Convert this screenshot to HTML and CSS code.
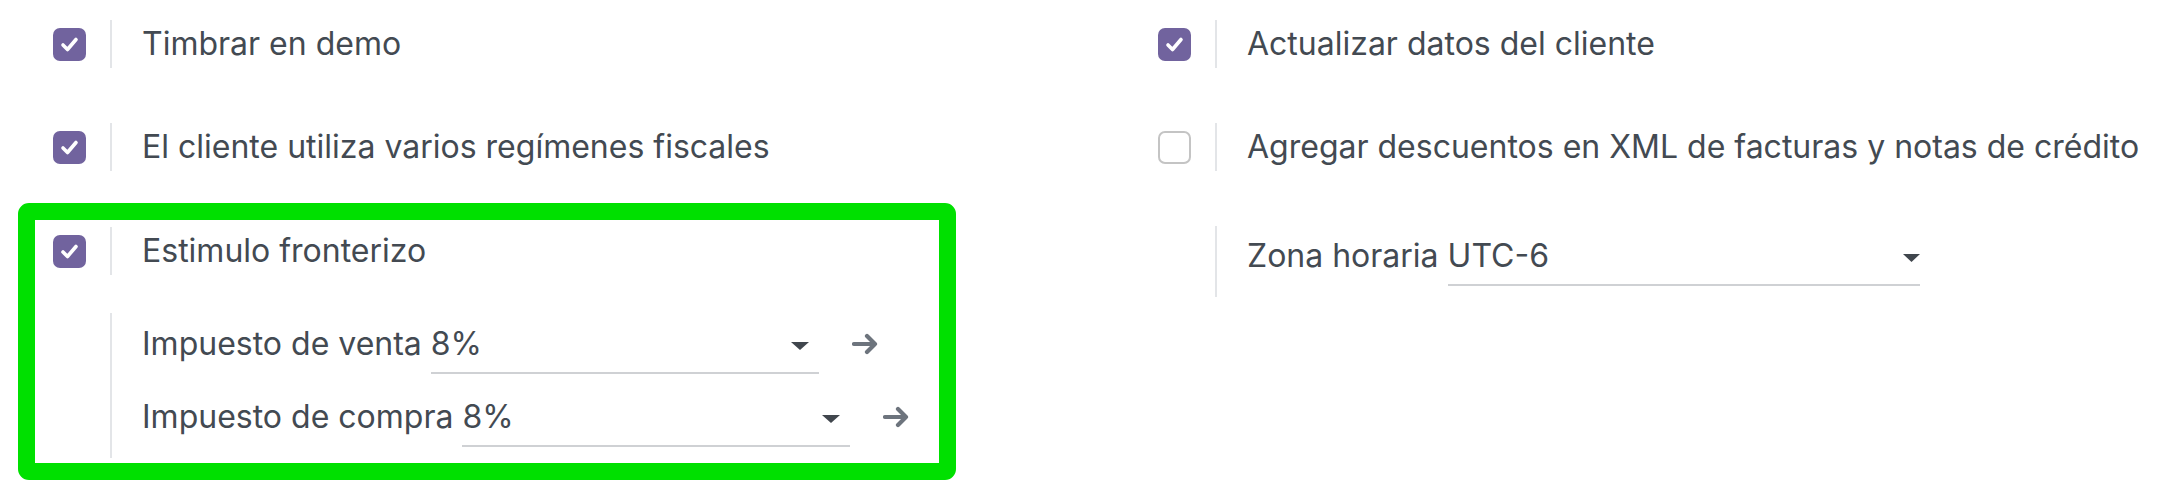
FILE: index.html
```html
<!DOCTYPE html>
<html>

<head>
  <meta http-equiv="Content-Type" content="text/html; charset=UTF-8">
  <title>Ajustes CFDI</title>
  <link rel="stylesheet" href="styles.css">
</head>

<body>

  <div class="settings">

    <!-- columna izquierda -->
    <div class="col">

      <div class="setting">
        <div class="setting-left">
          <span class="check on">
            <svg width="33" height="33" viewBox="0 0 33 33"><path d="M10 17 L14.5 21.5 L23 11.5" /></svg>
          </span>
        </div>
        <div class="setting-right">
          <span class="label">Timbrar en demo</span>
        </div>
      </div>

      <div class="setting">
        <div class="setting-left">
          <span class="check on">
            <svg width="33" height="33" viewBox="0 0 33 33"><path d="M10 17 L14.5 21.5 L23 11.5" /></svg>
          </span>
        </div>
        <div class="setting-right">
          <span class="label">El cliente utiliza varios regímenes fiscales</span>
        </div>
      </div>

      <div class="highlight">
        <div class="setting">
          <div class="setting-left">
            <span class="check on">
              <svg width="33" height="33" viewBox="0 0 33 33"><path d="M10 17 L14.5 21.5 L23 11.5" /></svg>
            </span>
          </div>
          <div class="setting-right">
            <span class="label">Estimulo fronterizo</span>
          </div>
        </div>

        <div class="setting sub">
          <div class="setting-left"></div>
          <div class="setting-right fields">
            <div class="field-row">
              <span class="label">Impuesto de venta</span>
              <span class="field tax">8%
                <svg class="caret" width="18" height="8" viewBox="0 0 18 8"><path d="M0 0 H18 L9 8 Z" /></svg>
              </span>
              <svg class="go" width="27" height="22" viewBox="0 0 27 22"><path d="M2 11 H23 M15 3 L23 11 L15 19" /></svg>
            </div>
            <div class="field-row">
              <span class="label">Impuesto de compra</span>
              <span class="field tax">8%
                <svg class="caret" width="18" height="8" viewBox="0 0 18 8"><path d="M0 0 H18 L9 8 Z" /></svg>
              </span>
              <svg class="go" width="27" height="22" viewBox="0 0 27 22"><path d="M2 11 H23 M15 3 L23 11 L15 19" /></svg>
            </div>
          </div>
        </div>
      </div>

    </div>

    <!-- columna derecha -->
    <div class="col">

      <div class="setting">
        <div class="setting-left">
          <span class="check on">
            <svg width="33" height="33" viewBox="0 0 33 33"><path d="M10 17 L14.5 21.5 L23 11.5" /></svg>
          </span>
        </div>
        <div class="setting-right">
          <span class="label">Actualizar datos del cliente</span>
        </div>
      </div>

      <div class="setting">
        <div class="setting-left">
          <span class="check"></span>
        </div>
        <div class="setting-right">
          <span class="label">Agregar descuentos en XML de facturas y notas de crédito</span>
        </div>
      </div>

      <div class="setting">
        <div class="setting-left"></div>
        <div class="setting-right fields">
          <div class="field-row">
            <span class="label">Zona horaria</span>
            <span class="field tz">UTC-6
              <svg class="caret" width="17" height="8" viewBox="0 0 17 8"><path d="M0 0 H17 L8.5 8 Z" /></svg>
            </span>
          </div>
        </div>
      </div>

    </div>

  </div>

</body>

</html>
```

FILE: styles.css
```css
body {
  margin: 0;
  background: #fff;
  font-family: Inter, "Noto Sans", sans-serif;
  font-size: 32px;
  line-height: 48px;
  color: #434a52;
}

.settings {
  display: grid;
  grid-template-columns: 1105px 1fr;
  align-items: start;
  padding: 20px 0 0 18px;
}

.setting {
  display: flex;
  padding-left: 35px;
}

.setting + .setting {
  margin-top: 55px;
}

.setting-left {
  width: 57px;
  flex: none;
  display: flex;
  align-items: center;
}

.setting-right {
  border-left: 2px solid #e3e5e8;
  padding-left: 30px;
}

.check {
  width: 33px;
  height: 33px;
  box-sizing: border-box;
  border: 2px solid #c4c4c4;
  border-radius: 7px;
  background: #fff;
}

.check.on {
  border: none;
  background: #71639e;
}

.check svg {
  display: block;
}

.check path {
  fill: none;
  stroke: #fff;
  stroke-width: 3.6;
  stroke-linecap: round;
  stroke-linejoin: round;
}

/* recuadro verde */
.highlight {
  margin-top: 32px;
  width: 938px;
  box-sizing: border-box;
  border: 17px solid #00e000;
  border-radius: 11px;
  padding: 7px 0 5px 0;
}

.highlight .setting {
  padding-left: 18px;
}

.highlight .setting.sub {
  margin-top: 38px;
}

.fields {
  padding-top: 6px;
  padding-bottom: 11px;
}

.sub .fields {
  padding-top: 7px;
}

.field-row + .field-row {
  margin-top: 19px;
}

.field {
  display: inline-flex;
  align-items: center;
  justify-content: space-between;
  box-sizing: border-box;
  padding-bottom: 4px;
  border-bottom: 2px solid #cfd1d4;
}

.field.tax {
  width: 388px;
  padding-right: 10px;
}

.field.tz {
  width: 472px;
  padding-right: 0;
}

.caret {
  margin-top: 4px;
}

.caret path {
  fill: #40464d;
}

.go {
  margin-left: 24px;
}

.go path {
  fill: none;
  stroke: #6d747d;
  stroke-width: 4.2;
  stroke-linecap: round;
  stroke-linejoin: round;
}
```
